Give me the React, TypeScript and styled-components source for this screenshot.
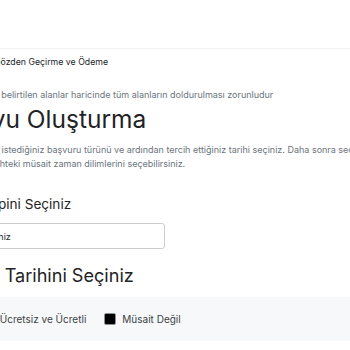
import styled, { createGlobalStyle } from "styled-components";

const Global = createGlobalStyle`
  html, body {
    margin: 0;
    padding: 0;
    background: #ffffff;
    overflow: hidden;
  }
  body {
    font-family: Inter, "Noto Sans", sans-serif;
    color: #212529;
  }
`;

// the page is scrolled sideways, so its left part sits outside the frame
const Page = styled.div`
  width: 560px;
  margin-left: -81px;
`;

const TopBar = styled.header`
  height: 48px;
  margin-left: 81px;
  border-bottom: 1px solid #f0f1f3;
`;

const Steps = styled.nav`
  display: flex;
  gap: 14px;
  padding: 7px 0 0 75px;
  font-size: 8.75px;
  line-height: 13px;
  color: #212529;
`;

const Note = styled.p`
  margin: 19px 0 0 63px;
  font-size: 9px;
  line-height: 13px;
  color: #6c757d;
`;

const Title = styled.h1`
  margin: 3px 0 0;
  font-size: 24.5px;
  font-weight: 400;
  line-height: 30px;
  color: #1f2326;
`;

const Lead = styled.p`
  margin: 9px 0 0 67px;
  font-size: 9px;
  line-height: 13.5px;
  color: #6c757d;
`;

const SectionTitle = styled.h2<{ $size: number; $indent?: number }>`
  margin: 0 0 0 ${(p) => p.$indent ?? 0}px;
  font-size: ${(p) => p.$size}px;
  font-weight: 400;
  line-height: ${(p) => Math.round(p.$size * 1.2)}px;
  color: #1f2326;
`;

const Field = styled.div`
  margin-top: 25.5px;
  display: flex;
  flex-direction: column;
  gap: 11.5px;
`;

const Select = styled.div`
  box-sizing: border-box;
  width: 198px;
  height: 26px;
  margin-left: 48px;
  padding: 0 12px;
  display: flex;
  align-items: center;
  border: 1px solid #c9cdd1;
  border-radius: 3px;
  font-size: 9px;
  color: #212529;
`;

const DateSection = styled.section`
  margin-top: 15px;
`;

const Legend = styled.div`
  margin-top: 11px;
  height: 44px;
  display: flex;
  align-items: center;
  gap: 18px;
  padding-left: 21px;
  background: #f7f8f9;
  font-size: 10px;
  color: #3a3f44;
`;

const LegendItem = styled.span`
  display: flex;
  align-items: center;
  gap: 6px;
`;

const Swatch = styled.span<{ $color: string }>`
  display: inline-block;
  box-sizing: border-box;
  width: 12px;
  height: 12px;
  border: 1.5px solid #8a8f94;
  border-radius: 2px;
  background: ${(p) => p.$color};
`;

export default function App() {
  return (
    <>
      <Global />
      <Page>
        <TopBar />
        <Steps>
          <span>Gözden Geçirme ve Ödeme</span>
        </Steps>
        <Note>* ile belirtilen alanlar haricinde tüm alanların doldurulması zorunludur</Note>
        <Title>Randevu Oluşturma</Title>
        <Lead>
          Siz istediğiniz başvuru türünü ve ardından tercih ettiğiniz tarihi seçiniz. Daha sonra seçtiğiniz
          <br />
          tarihteki müsait zaman dilimlerini seçebilirsiniz.
        </Lead>
        <Field>
          <SectionTitle $size={13.6} $indent={7}>
            Randevu Tipini Seçiniz
          </SectionTitle>
          <Select>Seçiniz</Select>
        </Field>
        <DateSection>
          <SectionTitle $size={18.1} $indent={6}>
            Randevu Tarihini Seçiniz
          </SectionTitle>
          <Legend>
            <LegendItem>
              <Swatch $color="#ffffff" />
              Müsait - Ücretsiz ve Ücretli
            </LegendItem>
            <LegendItem>
              <Swatch $color="#000000" />
              Müsait Değil
            </LegendItem>
          </Legend>
        </DateSection>
      </Page>
    </>
  );
}
